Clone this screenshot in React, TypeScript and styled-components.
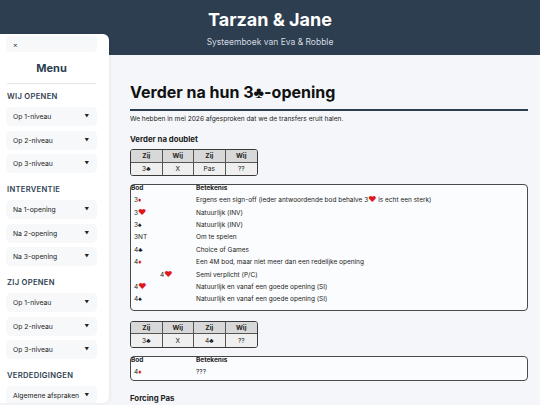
import React from "react";
import styled, { createGlobalStyle } from "styled-components";

const Global = createGlobalStyle`
  html, body { margin: 0; padding: 0; }
  body {
    font-family: Inter, "Noto Sans", "Liberation Sans", sans-serif;
    background: #f4f6f9;
    color: #1d1d1f;
    overflow: hidden;
  }
`;

const Page = styled.div`
  width: 540px;
  height: 405px;
  position: relative;
  overflow: hidden;
  background: #f4f6f9;
`;

const Header = styled.header`
  height: 55px;
  background: #2c3e50;
  color: #fff;
  display: flex;
  flex-direction: column;
  align-items: center;
  padding-top: 8px;
  box-sizing: border-box;
`;

const Title = styled.h1`
  margin: 0;
  font-size: 18px;
  font-weight: 700;
  line-height: 24px;
`;

const Subtitle = styled.div`
  margin-top: 5px;
  font-size: 8.5px;
  color: #d5dbe1;
  line-height: 11px;
`;

const Sidebar = styled.nav`
  position: absolute;
  left: 0;
  top: 34px;
  bottom: 2px;
  width: 109px;
  background: #fff;
  border-radius: 0 6px 6px 0;
  box-shadow: 1px 0 4px rgba(0, 0, 0, 0.06);
  padding: 2px 12px 0 6px;
  box-sizing: border-box;
  display: flex;
  flex-direction: column;
  overflow: hidden;
  & > * { flex-shrink: 0; }
`;

const Close = styled.div`
  height: 16px;
  background: #f7f8fa;
  border-radius: 4px;
  font-size: 7px;
  color: #333;
  display: flex;
  align-items: center;
  padding-left: 7px;
`;

const MenuTitle = styled.div`
  margin-top: 9px;
  text-align: center;
  font-size: 11px;
  font-weight: 700;
  color: #2c3e50;
  line-height: 14px;
`;

const Divider = styled.div`
  height: 1px;
  background: #e3e6ea;
  margin: 8px 1px 0 1px;
`;

const SectionLabel = styled.div<{ $first?: boolean }>`
  margin-top: ${(p) => (p.$first ? "8px" : "7.5px")};
  margin-bottom: 5px;
  padding-left: 1px;
  font-size: 7.6px;
  font-weight: 600;
  letter-spacing: 0.3px;
  color: #2c3e50;
  line-height: 10px;
`;

const Dropdown = styled.div`
  height: 19px;
  margin-bottom: 4.5px;
  background: #f7f8fa;
  border-radius: 5px;
  display: flex;
  align-items: center;
  justify-content: space-between;
  padding: 0 8px 0 7px;
  font-size: 6.8px;
  color: #222;
`;

const Arrow = styled.span`
  font-size: 4.5px;
  color: #222;
`;

const Main = styled.main`
  padding: 27px 12px 0 130px;
`;

const H2 = styled.h2`
  margin: 0;
  font-size: 16px;
  font-weight: 700;
  line-height: 20px;
  padding-bottom: 7px;
  border-bottom: 2px solid #2c3e50;
  color: #111;
`;

const Para = styled.p`
  margin: 4px 0 0 0;
  font-size: 6.6px;
  line-height: 9px;
  color: #222;
`;

const H4 = styled.h4<{ $top?: number }>`
  margin: ${(p) => p.$top ?? 10}px 0 0 0;
  font-size: 7.8px;
  font-weight: 700;
  line-height: 10px;
  color: #222;
`;

const AuctionGrid = styled.div<{ $top: number }>`
  margin-top: ${(p) => p.$top}px;
  width: 128px;
  display: grid;
  grid-template-columns: repeat(4, 1fr);
  border: 1.5px solid #3a3a3a;
  border-radius: 3px;
  overflow: hidden;
  box-sizing: border-box;
`;

const AuctionCell = styled.div<{ $head?: boolean; $last?: boolean }>`
  height: ${(p) => (p.$head ? "11.5px" : "12.5px")};
  display: flex;
  align-items: center;
  justify-content: center;
  font-size: 6.6px;
  font-weight: ${(p) => (p.$head ? 700 : 400)};
  background: ${(p) => (p.$head ? "#d8d8d8" : "#efefef")};
  border-right: ${(p) => (p.$last ? "none" : "1px solid #555")};
  border-bottom: ${(p) => (p.$head ? "1px solid #555" : "none")};
  color: #222;
`;

const BidBox = styled.div<{ $top: number; $pad: number }>`
  margin-top: ${(p) => p.$top}px;
  border: 1.5px solid #4a4a4a;
  border-radius: 4px;
  background: #fbfcfd;
  padding: 0 0 ${(p) => p.$pad}px 0;
  display: grid;
  grid-template-columns: 65px 1fr;
  grid-template-rows: 9.3px;
  grid-auto-rows: 12.4px;
  box-sizing: border-box;
`;

const BidHead = styled.div`
  font-size: 6.5px;
  font-weight: 700;
  line-height: 7px;
  color: #222;
`;

const BidCell = styled.div<{ $indent?: number }>`
  font-size: 6.5px;
  line-height: 12.4px;
  padding-left: ${(p) => p.$indent ?? 3}px;
  color: #222;
  white-space: nowrap;
`;

const MeanCell = styled.div`
  font-size: 6.5px;
  line-height: 12.4px;
  color: #222;
  white-space: nowrap;
`;

const Red = styled.span<{ $big?: boolean }>`
  color: #e0161b;
  font-size: ${(p) => (p.$big ? "8px" : "inherit")};
  line-height: 0;
`;

const Black = styled.span`
  color: #111;
  line-height: 0;
`;

const suit = (s: string) => {
  if (s === "♥") return <Red $big>♥</Red>;
  if (s === "♦") return <Red>♦</Red>;
  return <Black>{s}</Black>;
};

const Bid = ({ level, s }: { level: string; s?: string }) => (
  <>
    {level}
    {s ? suit(s) : null}
  </>
);

type Row = { level: string; s?: string; indent?: number; text: React.ReactNode };

const rows1: Row[] = [
  {
    level: "3",
    s: "♦",
    text: (
      <>
        Ergens een sign-off (ieder antwoordende bod behalve 3{suit("♥")} is echt een sterk)
      </>
    ),
  },
  { level: "3", s: "♥", text: "Natuurlijk (INV)" },
  { level: "3", s: "♠", text: "Natuurlijk (INV)" },
  { level: "3NT", text: "Om te spelen" },
  { level: "4", s: "♣", text: "Choice of Games" },
  { level: "4", s: "♦", text: "Een 4M bod, maar niet meer dan een redelijke opening" },
  { level: "4", s: "♥", indent: 29, text: "Semi verplicht (P/C)" },
  { level: "4", s: "♥", text: "Natuurlijk en vanaf een goede opening (SI)" },
  { level: "4", s: "♠", text: "Natuurlijk en vanaf een goede opening (SI)" },
];

const rows2: Row[] = [{ level: "4", s: "♦", text: "???" }];

const BidTable = ({ rows, top, pad }: { rows: Row[]; top: number; pad: number }) => (
  <BidBox $top={top} $pad={pad}>
    <BidHead>Bod</BidHead>
    <BidHead>Betekenis</BidHead>
    {rows.map((r, i) => (
      <React.Fragment key={i}>
        <BidCell $indent={r.indent}>
          <Bid level={r.level} s={r.s} />
        </BidCell>
        <MeanCell>{r.text}</MeanCell>
      </React.Fragment>
    ))}
  </BidBox>
);

const Auction = ({ cells, top }: { cells: React.ReactNode[]; top: number }) => {
  const heads = ["Zij", "Wij", "Zij", "Wij"];
  return (
    <AuctionGrid $top={top}>
      {heads.map((h, i) => (
        <AuctionCell key={"h" + i} $head $last={i === 3}>
          {h}
        </AuctionCell>
      ))}
      {cells.map((c, i) => (
        <AuctionCell key={"c" + i} $last={i === 3}>
          {c}
        </AuctionCell>
      ))}
    </AuctionGrid>
  );
};

const menu: { label: string; items: string[] }[] = [
  { label: "WIJ OPENEN", items: ["Op 1-niveau", "Op 2-niveau", "Op 3-niveau"] },
  { label: "INTERVENTIE", items: ["Na 1-opening", "Na 2-opening", "Na 3-opening"] },
  { label: "ZIJ OPENEN", items: ["Op 1-niveau", "Op 2-niveau", "Op 3-niveau"] },
  { label: "VERDEDIGINGEN", items: ["Algemene afspraken"] },
];

export default function App() {
  return (
    <Page>
      <Global />
      <Header>
        <Title>Tarzan &amp; Jane</Title>
        <Subtitle>Systeemboek van Eva &amp; Robble</Subtitle>
      </Header>
      <Main>
        <H2>Verder na hun 3{suit("♣")}-opening</H2>
        <Para>We hebben in mei 2026 afgesproken dat we de transfers eruit halen.</Para>
        <H4>Verder na doublet</H4>
        <Auction top={5} cells={[<Bid key="a" level="3" s="♣" />, "X", "Pas", "??"]} />
        <BidTable rows={rows1} top={8} pad={4} />
        <Auction top={10} cells={[<Bid key="a" level="3" s="♣" />, "X", <Bid key="b" level="4" s="♣" />, "??"]} />
        <BidTable rows={rows2} top={8} pad={1} />
        <H4 $top={12}>Forcing Pas</H4>
      </Main>
      <Sidebar>
        <Close>×</Close>
        <MenuTitle>Menu</MenuTitle>
        <Divider />
        {menu.map((sec, si) => (
          <React.Fragment key={sec.label}>
            <SectionLabel $first={si === 0}>{sec.label}</SectionLabel>
            {sec.items.map((it) => (
              <Dropdown key={it}>
                <span>{it}</span>
                <Arrow>▼</Arrow>
              </Dropdown>
            ))}
          </React.Fragment>
        ))}
      </Sidebar>
    </Page>
  );
}
